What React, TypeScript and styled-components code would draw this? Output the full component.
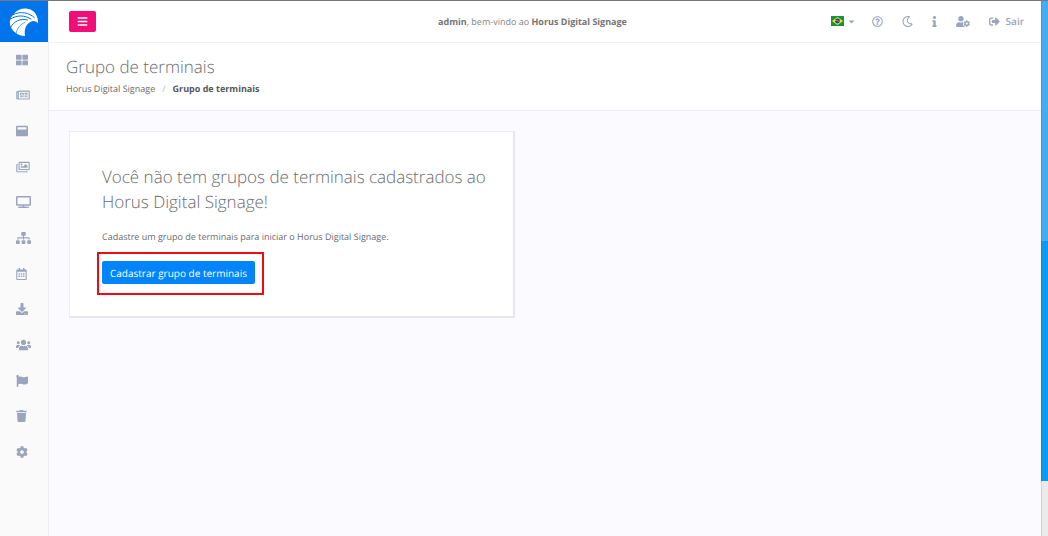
import React from 'react';
import styled, { createGlobalStyle } from 'styled-components';
import type { IconType } from 'react-icons';
import {
  FaBars, FaThLarge, FaRegNewspaper, FaWindowMaximize, FaRegImages, FaTv, FaSitemap,
  FaRegCalendarAlt, FaDownload, FaUsers, FaFlag, FaTrash, FaCog, FaRegQuestionCircle,
  FaRegMoon, FaInfo, FaUserCog, FaSignOutAlt, FaCaretDown,
} from 'react-icons/fa';

const GlobalStyle = createGlobalStyle`
  *, *::before, *::after { box-sizing: border-box; }
  body {
    margin: 0;
    font-family: "Open Sans", "Noto Sans", sans-serif;
    font-size: 9px;
    color: #6a6c6f;
    background: #fafaff;
    text-rendering: geometricPrecision;
  }
  button { text-rendering: inherit; }
`;

const Page = styled.div`
  display: flex;
  min-height: 100vh;
  border-top: 1px solid #777;
`;

const Sidebar = styled.aside`
  width: 49px;
  flex: none;
  background: #fafafa;
  border-right: 1px solid #eeeef2;
`;

const LogoLink = styled.a`
  display: flex;
  align-items: center;
  justify-content: center;
  width: 48px;
  height: 41px;
  background: #0074ec;
`;

const Menu = styled.nav`
  display: grid;
  grid-template-rows: repeat(12, 1fr);
  height: 428px;
`;

const MenuLink = styled.a<{ $iconWidth: number }>`
  display: flex;
  align-items: center;
  padding-left: 16px;
  color: #9aa5bd;
  svg { width: ${(p) => p.$iconWidth}px; height: 12px; }
`;

const Main = styled.div`
  flex: 1;
  min-width: 0;
`;

const Topbar = styled.header`
  display: grid;
  grid-template-columns: 1fr auto 1fr;
  align-items: center;
  height: 42px;
  padding: 0 17px 1px 20px;
  background: #fff;
  border-bottom: 1px solid #f2f2f5;
`;

const ToggleButton = styled.button`
  display: flex;
  align-items: center;
  justify-content: center;
  width: 27px;
  height: 21px;
  padding: 0;
  border: 0;
  border-radius: 2px;
  background: #f20d79;
  color: #fff;
  font-size: 11px;
`;

const Welcome = styled.p`
  margin: 0;
  padding-right: 28px;
  color: #858585;
  strong { font-weight: 700; color: #747474; }
`;

const Tools = styled.div`
  display: flex;
  align-items: center;
  justify-content: flex-end;
  gap: 19px;
`;

const ToolButton = styled.button<{ $iconWidth?: number }>`
  display: flex;
  align-items: center;
  padding: 0;
  border: 0;
  background: none;
  color: #9aa5bd;
  svg { width: ${(p) => p.$iconWidth ?? 11}px; height: 11px; }
`;

const FlagButton = styled.button`
  display: flex;
  align-items: center;
  gap: 3px;
  margin-right: -3px;
  padding: 0;
  border: 0;
  background: none;
  color: #9aa5bd;
  font-size: 9px;
`;

const ExitLink = styled.a`
  display: flex;
  align-items: center;
  gap: 6px;
  color: #9aa5bd;
  font-size: 10px;
  font-weight: 600;
  text-decoration: none;
  svg { width: 11px; height: 11px; }
`;

const PageHeader = styled.section`
  height: 68px;
  padding: 12px 17px;
  background: #fff;
  border-bottom: 1px solid #efeff3;
`;

const Title = styled.h1`
  margin: 0;
  font-size: 17px;
  line-height: 24px;
  font-weight: 300;
`;

const Crumbs = styled.nav`
  display: flex;
  gap: 7px;
  margin-top: 3px;
  line-height: 14px;
  a { color: inherit; text-decoration: none; }
  span { color: #bbb; }
  strong { font-weight: 700; color: #55585c; }
`;

const Content = styled.main`
  padding: 20px;
`;

const Card = styled.section`
  width: calc(50% - 30px);
  min-width: 440px;
  padding: 32px 24px 21px 32px;
  background: #fff;
  border: 1px solid #ececf2;
  border-right: 2px solid #e6e6ee;
  border-bottom: 2px solid #e6e6ee;
`;

const CardTitle = styled.h2`
  margin: 0 0 16px;
  font-size: 17px;
  line-height: 25px;
  font-weight: 300;
`;

const CardText = styled.p`
  margin: 0 0 8px;
  line-height: 14px;
`;

const Highlight = styled.div`
  width: fit-content;
  margin-left: -5px;
  padding: 7px 7px 9px 3px;
  border: 2px solid #f40812;
`;

const PrimaryButton = styled.button`
  display: block;
  height: 23px;
  padding: 0 8px;
  border: 0;
  border-radius: 2px;
  background: #0384fb;
  color: #fff;
  font: 500 10px "Open Sans", sans-serif;
`;

const Rail = styled.div`
  display: grid;
  grid-template-rows: 240fr 240fr 55fr;
  flex: none;
  width: 7px;
`;

const RailPart = styled.div<{ $color: string }>`
  background: ${(p) => p.$color};
  border-left: 1px solid #00000018;
`;

const Logo = () => (
  <svg width="30" height="30" viewBox="0 0 90 90" aria-hidden="true">
    <path
      fill="#fff"
      d="M14 22C26 4 50 0 67 9C81 17 88 31 87 49C80 41 71 40 64 45C51 53 45 66 48 87C27 86 10 73 4 56C0 42 4 32 14 22Z"
    />
    <g fill="none" stroke="#0074ec" strokeLinecap="round" strokeWidth="3">
      <path d="M12 23C34 12 60 16 76 32" />
      <path d="M3 37C24 23 46 24 66 36" />
      <path d="M5 61C14 43 34 33 55 39" />
      <path d="M21 80C24 64 34 52 48 46" strokeWidth="2" />
    </g>
  </svg>
);

const BrazilFlag = () => (
  <svg width="13" height="10" viewBox="0 0 26 20" aria-hidden="true">
    <path fill="#16963a" d="M0 0h26v20H0z" />
    <path fill="#fbdc20" d="M13 2l11 8-11 8L2 10z" />
    <circle cx="13" cy="10" r="4.8" fill="#1c3f94" />
    <path d="M8.5 9c3-.6 6 .4 8.5 3" stroke="#fff" fill="none" />
  </svg>
);

const items: { label: string; icon: IconType; width: number }[] = [
  { label: 'Painel', icon: FaThLarge, width: 12 },
  { label: 'Notícias', icon: FaRegNewspaper, width: 14 },
  { label: 'Layouts', icon: FaWindowMaximize, width: 12 },
  { label: 'Mídias', icon: FaRegImages, width: 14 },
  { label: 'Terminais', icon: FaTv, width: 15 },
  { label: 'Grupos', icon: FaSitemap, width: 15 },
  { label: 'Agenda', icon: FaRegCalendarAlt, width: 11 },
  { label: 'Downloads', icon: FaDownload, width: 12 },
  { label: 'Usuários', icon: FaUsers, width: 15 },
  { label: 'Relatórios', icon: FaFlag, width: 12 },
  { label: 'Lixeira', icon: FaTrash, width: 11 },
  { label: 'Configurações', icon: FaCog, width: 12 },
];

export default function App() {
  return (
    <>
      <GlobalStyle />
      <Page>
        <Sidebar>
          <LogoLink href="#" aria-label="Horus"><Logo /></LogoLink>
          <Menu>
            {items.map(({ label, icon: Icon, width }) => (
              <MenuLink key={label} href="#" aria-label={label} $iconWidth={width}><Icon /></MenuLink>
            ))}
          </Menu>
        </Sidebar>
        <Main>
          <Topbar>
            <ToggleButton aria-label="Menu"><FaBars /></ToggleButton>
            <Welcome><strong>admin</strong>, bem-vindo ao <strong>Horus Digital Signage</strong></Welcome>
            <Tools>
              <FlagButton aria-label="Idioma"><BrazilFlag /><FaCaretDown /></FlagButton>
              <ToolButton aria-label="Ajuda"><FaRegQuestionCircle /></ToolButton>
              <ToolButton aria-label="Modo escuro"><FaRegMoon /></ToolButton>
              <ToolButton aria-label="Informações" $iconWidth={5}><FaInfo /></ToolButton>
              <ToolButton aria-label="Conta" $iconWidth={14}><FaUserCog /></ToolButton>
              <ExitLink href="#"><FaSignOutAlt />Sair</ExitLink>
            </Tools>
          </Topbar>
          <PageHeader>
            <Title>Grupo de terminais</Title>
            <Crumbs aria-label="Trilha">
              <a href="#">Horus Digital Signage</a>
              <span>/</span>
              <strong>Grupo de terminais</strong>
            </Crumbs>
          </PageHeader>
          <Content>
            <Card>
              <CardTitle>Você não tem grupos de terminais cadastrados ao Horus Digital Signage!</CardTitle>
              <CardText>Cadastre um grupo de terminais para iniciar o Horus Digital Signage.</CardText>
              <Highlight>
                <PrimaryButton>Cadastrar grupo de terminais</PrimaryButton>
              </Highlight>
            </Card>
          </Content>
        </Main>
        <Rail>
          <RailPart $color="#42adf3" />
          <RailPart $color="#0b9bf0" />
          <RailPart $color="#ebebeb" />
        </Rail>
      </Page>
    </>
  );
}
